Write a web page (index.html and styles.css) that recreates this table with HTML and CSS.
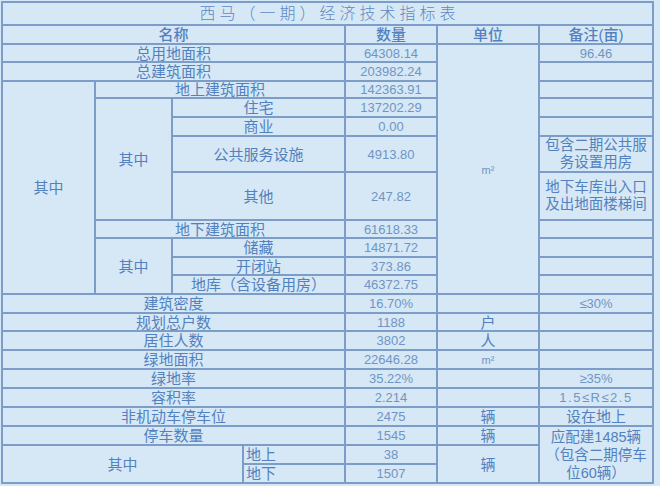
FILE: index.html
```html
<!DOCTYPE html>
<html lang="zh-CN">
<head>
<meta charset="utf-8">
<title>西马（一期）经济技术指标表</title>
<link rel="stylesheet" href="styles.css">
</head>
<body>
<div class="sheet">
  <div class="cell title c-all">西马（一期）经济技术指标表</div>

  <div class="cell head c-name">名称</div>
  <div class="cell head c-qty">数量</div>
  <div class="cell head c-unit">单位</div>
  <div class="cell head c-note">备注(亩)</div>

  <div class="cell c-name">总用地面积</div>
  <div class="cell num c-qty">64308.14</div>
  <div class="cell unit c-unit r-11">m²</div>
  <div class="cell num c-note">96.46</div>

  <div class="cell c-name">总建筑面积</div>
  <div class="cell num c-qty">203982.24</div>
  <div class="cell c-note"></div>

  <div class="cell c-1 r-9">其中</div>
  <div class="cell c-sub1">地上建筑面积</div>
  <div class="cell num c-qty">142363.91</div>
  <div class="cell c-note"></div>

  <div class="cell c-2 r-4">其中</div>
  <div class="cell c-sub2">住宅</div>
  <div class="cell num c-qty">137202.29</div>
  <div class="cell c-note"></div>

  <div class="cell c-sub2">商业</div>
  <div class="cell num c-qty">0.00</div>
  <div class="cell c-note"></div>

  <div class="cell c-sub2">公共服务设施</div>
  <div class="cell num c-qty">4913.80</div>
  <div class="cell remark c-note">包含二期公共服<br>务设置用房</div>

  <div class="cell c-sub2">其他</div>
  <div class="cell num c-qty">247.82</div>
  <div class="cell remark c-note">地下车库出入口<br>及出地面楼梯间</div>

  <div class="cell c-sub1">地下建筑面积</div>
  <div class="cell num c-qty">61618.33</div>
  <div class="cell c-note"></div>

  <div class="cell c-2 r-3">其中</div>
  <div class="cell c-sub2">储藏</div>
  <div class="cell num c-qty">14871.72</div>
  <div class="cell c-note"></div>

  <div class="cell c-sub2">开闭站</div>
  <div class="cell num c-qty">373.86</div>
  <div class="cell c-note"></div>

  <div class="cell c-sub2">地库（含设备用房）</div>
  <div class="cell num c-qty">46372.75</div>
  <div class="cell c-note"></div>

  <div class="cell c-name">建筑密度</div>
  <div class="cell num c-qty">16.70%</div>
  <div class="cell c-unit"></div>
  <div class="cell num c-note">≤30%</div>

  <div class="cell c-name">规划总户数</div>
  <div class="cell num c-qty">1188</div>
  <div class="cell c-unit">户</div>
  <div class="cell c-note"></div>

  <div class="cell c-name">居住人数</div>
  <div class="cell num c-qty">3802</div>
  <div class="cell c-unit">人</div>
  <div class="cell c-note"></div>

  <div class="cell c-name">绿地面积</div>
  <div class="cell num c-qty">22646.28</div>
  <div class="cell unit c-unit">m²</div>
  <div class="cell c-note"></div>

  <div class="cell c-name">绿地率</div>
  <div class="cell num c-qty">35.22%</div>
  <div class="cell c-unit"></div>
  <div class="cell num c-note">≥35%</div>

  <div class="cell c-name">容积率</div>
  <div class="cell num c-qty">2.214</div>
  <div class="cell c-unit"></div>
  <div class="cell num wide c-note">1.5≤R≤2.5</div>

  <div class="cell c-name">非机动车停车位</div>
  <div class="cell num c-qty">2475</div>
  <div class="cell c-unit">辆</div>
  <div class="cell c-note">设在地上</div>

  <div class="cell c-name">停车数量</div>
  <div class="cell num c-qty">1545</div>
  <div class="cell c-unit">辆</div>
  <div class="cell remark tall c-note r-3">应配建1485辆<br>（包含二期停车<br>位60辆）</div>

  <div class="cell c-left3 r-2">其中</div>
  <div class="cell left c-4">地上</div>
  <div class="cell num c-qty">38</div>
  <div class="cell c-unit r-2">辆</div>

  <div class="cell left c-4">地下</div>
  <div class="cell num c-qty">1507</div>
</div>
</body>
</html>
```

FILE: styles.css
```css
html, body {
  margin: 0;
  padding: 0;
  background: #d6e8f5;
}

.sheet {
  margin: 1px 0 0 1px;
  display: grid;
  grid-template-columns: 91px 75px 69px 100px 90px 100px 112px;
  grid-template-rows: 21px 17px 16px 17px 15px 17px 17px 34px 46px 16px 17px 16px 17px 17px 16px 17px 17px 17px 17px 17px 17px 17px 17px;
  gap: 2px;
  width: max-content;
  border: 2px solid #7d9dc9;
  background: #7d9dc9;
  font-family: "Liberation Sans", "Noto Sans CJK SC", sans-serif;
  color: #5381be;
}

.cell {
  background: #d6e8f5;
  display: flex;
  align-items: center;
  justify-content: center;
  text-align: center;
  font-size: 15px;
  line-height: 16px;
  padding-top: 1px;
  box-sizing: border-box;
  white-space: nowrap;
}

.title {
  font-family: "Liberation Serif", "Noto Sans CJK SC", serif;
  font-weight: 300;
  font-size: 16px;
  letter-spacing: 4px;
  color: #6089c0;
  padding-left: 4px;
}

.head {
  font-weight: 500;
}

.num {
  font-family: "Liberation Sans", "Noto Sans CJK SC", sans-serif;
  font-size: 13px;
  color: #7095c4;
}

.wide {
  letter-spacing: 1.5px;
}

.unit {
  font-size: 11px;
  color: #7095c4;
}

.remark {
  font-size: 14.5px;
  line-height: 17px;
  padding-top: 0;
}

.tall {
  line-height: 18px;
  padding-top: 1px;
}

.left {
  justify-content: flex-start;
  padding-left: 2px;
}

.c-all { grid-column: 1 / 8; }
.c-name { grid-column: 1 / 5; }
.c-sub1 { grid-column: 2 / 5; }
.c-sub2 { grid-column: 3 / 5; }
.c-left3 { grid-column: 1 / 4; }
.c-1 { grid-column: 1; }
.c-2 { grid-column: 2; }
.c-4 { grid-column: 4; }
.c-qty { grid-column: 5; }
.c-unit { grid-column: 6; }
.c-note { grid-column: 7; }

.r-2 { grid-row: span 2; }
.r-3 { grid-row: span 3; }
.r-4 { grid-row: span 4; }
.r-9 { grid-row: span 9; }
.r-11 { grid-row: span 11; }
```
